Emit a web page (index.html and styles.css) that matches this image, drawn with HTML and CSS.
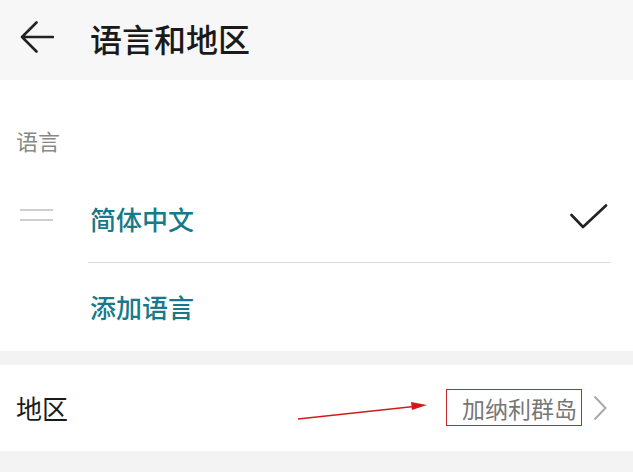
FILE: index.html
```html
<!DOCTYPE html>
<html lang="zh-CN">
<head>
    <meta charset="UTF-8">
    <meta name="viewport" content="width=device-width, initial-scale=1.0">
    <title>语言和地区</title>
    <link rel="stylesheet" href="styles.css">
</head>
<body>
    <div class="header">
        <svg class="back" width="34" height="34" viewBox="0 0 34 34">
            <path d="M2 17 H33 M2 17 L16.5 2.5 M2 17 L16.5 31.5" fill="none" stroke="#222" stroke-width="2.6" stroke-linecap="round"/>
        </svg>
        <h1>语言和地区</h1>
    </div>

    <div class="section">
        <div class="label">语言</div>
        <div class="row lang">
            <div class="handle"><span></span><span></span></div>
            <span class="name">简体中文</span>
            <svg class="check" width="38" height="26" viewBox="0 0 38 26">
                <path d="M1.5 11 L13 23 L36 1.5" fill="none" stroke="#222" stroke-width="2.6" stroke-linecap="round" stroke-linejoin="round"/>
            </svg>
        </div>
        <div class="divider"></div>
        <div class="row add">
            <span class="name">添加语言</span>
        </div>
    </div>

    <div class="section region">
        <span class="title">地区</span>
        <span class="value">加纳利群岛</span>
        <svg class="chevron" width="14" height="26" viewBox="0 0 14 26">
            <path d="M1.5 1.5 L12.5 13 L1.5 24.5" fill="none" stroke="#aaa" stroke-width="2"/>
        </svg>
    </div>

    <!-- annotation drawn over the screenshot -->
    <div class="mark"></div>
    <svg class="arrow" width="633" height="472" viewBox="0 0 633 472">
        <line x1="298" y1="419" x2="414" y2="406.5" stroke="#d21a1a" stroke-width="1.3"/>
        <polygon points="427,405 411,402 412,410" fill="#d21a1a"/>
    </svg>
</body>
</html>
```

FILE: styles.css
```css
body {
    margin: 0;
    background-color: #f3f3f3;
    font-family: "Noto Sans CJK SC", "Noto Sans", sans-serif;
    position: relative;
    height: 472px;
    overflow: hidden;
}
.header {
    height: 80px;
    background-color: #f7f7f7;
    display: flex;
    align-items: center;
    padding-left: 20px;
}
.back {
    display: block;
    margin-top: -6px;
}
.header h1 {
    margin: -4px 0 0 36px;
    font-size: 32px;
    font-weight: 500;
    color: #1a1a1a;
    line-height: 40px;
}
.section {
    background-color: white;
}
.label {
    height: 95px;
    box-sizing: border-box;
    padding: 44px 16px 0;
    font-size: 22px;
    line-height: 32px;
    color: #888;
}
.row {
    display: flex;
    align-items: center;
    padding-left: 90px;
    padding-right: 25px;
}
.lang {
    height: 87px;
    position: relative;
}
.add {
    height: 88px;
}
.name {
    font-size: 26px;
    font-weight: 500;
    color: #17798a;
    line-height: 32px;
}
.handle {
    position: absolute;
    left: 20px;
    top: 34px;
}
.handle span {
    display: block;
    width: 33px;
    height: 2px;
    background-color: #cfcfcf;
    margin-bottom: 8px;
}
.check {
    margin-left: auto;
    margin-top: -4px;
}
.divider {
    height: 1px;
    background-color: #dcdcdc;
    margin-left: 88px;
    margin-right: 22px;
}
.region {
    margin-top: 14px;
    height: 86px;
    display: flex;
    align-items: center;
    padding: 0 26px 0 16px;
}
.region .title {
    font-size: 26px;
    color: #1a1a1a;
    line-height: 32px;
}
.region .value {
    margin-left: auto;
    font-size: 23px;
    color: #777;
    line-height: 30px;
    margin-right: 16px;
}
.mark {
    position: absolute;
    left: 446px;
    top: 389px;
    width: 134px;
    height: 35px;
    border: 1px solid #c0262a;
}
.arrow {
    position: absolute;
    left: 0;
    top: 0;
}
```
